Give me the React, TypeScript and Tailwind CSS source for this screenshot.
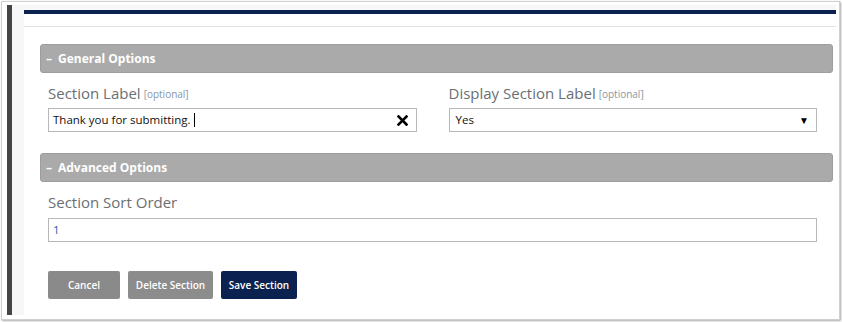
import React from "react";

const font = { fontFamily: '"Open Sans", "Liberation Sans", sans-serif' };

function SectionHeader({ title }: { title: string }) {
  return (
    <div className="h-[29px] flex items-center pl-[5px] bg-[#aaaaaa] border border-[#9d9d9d] rounded-[3px] text-white font-bold text-[12px] leading-none">
      <span className="mr-[6px]">–</span>
      <span>{title}</span>
    </div>
  );
}

function Label({ text, optional }: { text: string; optional?: boolean }) {
  return (
    <div className="h-[20px] flex items-end leading-[20px] whitespace-nowrap">
      <span className="text-[15px] text-[#6a6f74]">{text}</span>
      {optional && (
        <span className="ml-[3px] text-[10px] text-[#8796a8] leading-[18px]">[optional]</span>
      )}
    </div>
  );
}

export default function App() {
  return (
    <div className="w-[842px] h-[322px] bg-white overflow-hidden" style={font}>
      <div className="ml-[1px] mt-[1px] w-[839px] h-[319px] border border-[#d0d0d0] shadow-[1px_1px_2px_rgba(0,0,0,0.35)] bg-white flex pt-[3px] pb-[4px] pl-[5px] pr-[3px]">
        <div className="w-[5px] bg-[#454545]" />
        <div className="w-[12px] bg-[#f7f7f7]" />
        <div className="flex-1 flex flex-col">
          <div className="h-[5px] bg-[#f7f7f7]" />
          <div className="h-[4px] bg-[#0b2250]" />
          <div className="h-[12px] bg-white" />
          <div className="h-[1px] bg-[#e2e2e2]" />
          <div className="flex-1 bg-white pl-[16px] pr-[3px] pt-[17px]">
            <SectionHeader title="General Options" />
            <div className="grid grid-cols-2 gap-x-[32px] pl-[8px] pr-[16px] mt-[10px]">
              <div>
                <Label text="Section Label" optional />
                <div className="mt-[5px] h-[24px] border border-[#b8b8b8] bg-white flex items-center pl-[4px] pr-[8px]">
                  <span className="text-[11.5px] text-[#111] whitespace-nowrap">Thank you for submitting.</span>
                  <span className="ml-[3px] w-[1px] h-[14px] bg-black" />
                  <div className="flex-1" />
                  <svg width="11" height="11" viewBox="0 0 11 11">
                    <path d="M1.5 1.5 L9.5 9.5 M9.5 1.5 L1.5 9.5" stroke="#000" strokeWidth="2.6" strokeLinecap="square" />
                  </svg>
                </div>
              </div>
              <div>
                <Label text="Display Section Label" optional />
                <div className="mt-[5px] h-[24px] border border-[#b8b8b8] bg-white flex items-center pl-[6px] pr-[7px]">
                  <span className="text-[11.5px] text-[#111]">Yes</span>
                  <div className="flex-1" />
                  <span className="text-[10px] text-black leading-none">▼</span>
                </div>
              </div>
            </div>
            <div className="mt-[21px]">
              <SectionHeader title="Advanced Options" />
            </div>
            <div className="pl-[8px] pr-[16px] mt-[10px]">
              <Label text="Section Sort Order" />
              <div className="mt-[6px] h-[24px] border border-[#b8b8b8] bg-white flex items-center pl-[4px]">
                <span className="text-[11.5px] text-[#2a5fa8]">1</span>
              </div>
              <div className="mt-[29px] flex gap-[8px]">
                <button className="h-[28px] w-[72px] bg-[#8a8a8a] rounded-[2px] text-white text-[10px] font-semibold">Cancel</button>
                <button className="h-[28px] w-[85px] bg-[#8c8c8c] rounded-[2px] text-white text-[10px] font-semibold">Delete Section</button>
                <button className="h-[28px] w-[76px] bg-[#0b2250] rounded-[2px] text-white text-[10px] font-semibold">Save Section</button>
              </div>
            </div>
          </div>
        </div>
      </div>
    </div>
  );
}
